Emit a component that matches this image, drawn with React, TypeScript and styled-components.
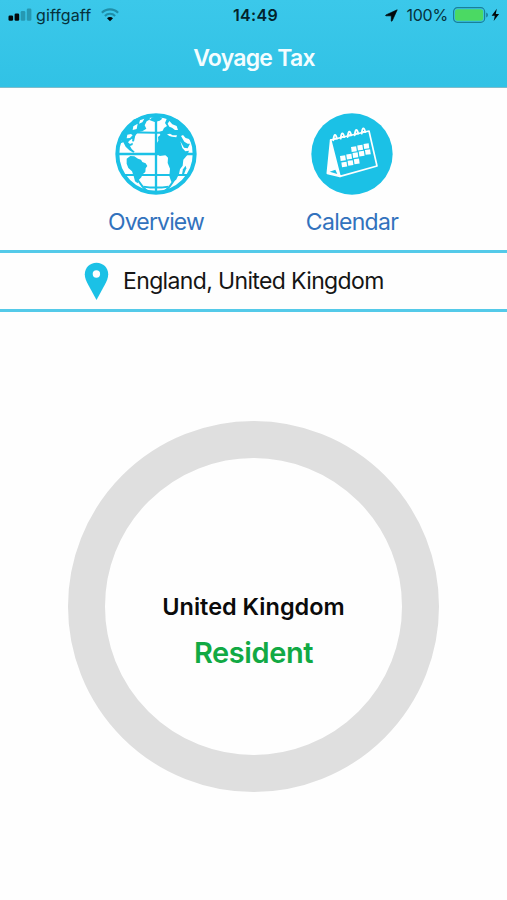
import React from 'react';
import styled, { createGlobalStyle } from 'styled-components';

const GlobalStyle = createGlobalStyle`
  *, *::before, *::after { box-sizing: border-box; }
  body { margin: 0; background: #fefefe; }
`;

const CYAN = '#1bc1e6';

const Screen = styled.main`
  width: 507px;
  height: 900px;
  overflow: hidden;
  display: flex;
  flex-direction: column;
  background: #fefefe;
  font-family: Inter, 'Liberation Sans', sans-serif;
`;

const Header = styled.header`
  height: 88px;
  flex: none;
  background: linear-gradient(#3bc8ea, #31c2e5);
  border-bottom: 1px solid #7fbccb;
`;

const StatusBar = styled.div`
  height: 30px;
  display: grid;
  grid-template-columns: 1fr auto 1fr;
  align-items: center;
  padding: 0 6px 0 8px;
  color: #06313b;
`;

const StatusGroup = styled.div<{ $end?: boolean }>`
  display: flex;
  align-items: center;
  justify-content: ${(p) => (p.$end ? 'flex-end' : 'flex-start')};
`;

const StatusText = styled.span<{ $spacing: number }>`
  font-size: 16px;
  line-height: 20px;
  letter-spacing: ${(p) => p.$spacing}px;
  white-space: nowrap;
`;

const Clock = styled(StatusText)`
  font-weight: 600;
  padding-left: 2px;
  color: #03232b;
`;

const Carrier = styled(StatusText)`
  margin: 0 10px 0 4px;
`;

const Charge = styled(StatusText)`
  margin: 0 5px 0 8px;
`;

const Title = styled.h1`
  margin: 13px 0 0;
  font-size: 23px;
  line-height: 30px;
  font-weight: 600;
  letter-spacing: -0.75px;
  padding-left: 1px;
  text-align: center;
  color: #f4fdff;
`;

const Tabs = styled.nav`
  height: 162px;
  flex: none;
  padding: 25px 57px 0 58px;
  display: grid;
  grid-template-columns: 1fr 1fr;
`;

const Tab = styled.a`
  display: flex;
  flex-direction: column;
  align-items: center;
  gap: 12px;
  color: #3272bd;
  text-decoration: none;
`;

const TabLabel = styled.span<{ $spacing: number }>`
  font-size: 23px;
  line-height: 30px;
  letter-spacing: ${(p) => p.$spacing}px;
`;

const LocationBar = styled.section`
  height: 62px;
  flex: none;
  display: flex;
  align-items: center;
  gap: 14px;
  padding-left: 84px;
  border-top: 3px solid #54cae9;
  border-bottom: 3px solid #54cae9;
`;

const LocationText = styled.span`
  font-size: 23px;
  line-height: 30px;
  letter-spacing: -0.64px;
  white-space: nowrap;
  color: #151515;
`;

const Ring = styled.section`
  width: 371px;
  height: 371px;
  flex: none;
  align-self: center;
  margin-top: 109px;
  border: 37px solid #dfdfdf;
  border-radius: 50%;
  padding-top: 134px;
  display: flex;
  flex-direction: column;
  align-items: center;
  gap: 13px;
`;

const Country = styled.strong`
  font-size: 23.5px;
  line-height: 30px;
  font-weight: 600;
  letter-spacing: 0;
  color: #0b0b0b;
`;

const Status = styled.span`
  font-size: 29px;
  line-height: 36px;
  font-weight: 600;
  letter-spacing: -0.4px;
  color: #11a944;
`;

const SignalIcon = () => (
  <svg width="24" height="14" viewBox="0 0 24 14">
    <rect x="0.5" y="7.5" width="4.6" height="5.2" rx="1.3" fill="#02090b" />
    <rect x="6.6" y="5.4" width="4.6" height="7.3" rx="1.3" fill="#02090b" />
    <rect x="12.7" y="3" width="4.6" height="9.7" rx="1.3" fill="#2698b2" />
    <rect x="18.8" y="0.5" width="4.6" height="12.2" rx="1.3" fill="#2698b2" />
  </svg>
);

const WifiIcon = () => (
  <svg width="18" height="14" viewBox="0 0 18 14" fill="none">
    <path d="M0.9 4.8 C5.2 0.3 12.8 0.3 17.1 4.8" stroke="#1f8ea8" strokeWidth="2.2" />
    <path d="M3.9 7.9 C6.7 5.1 11.3 5.1 14.1 7.9" stroke="#1f8ea8" strokeWidth="2.1" />
    <path d="M9 13.2 L6 10.2 C7.6 8.7 10.4 8.7 12 10.2 Z" fill="#02090b" />
  </svg>
);

const ArrowIcon = () => (
  <svg width="13" height="13" viewBox="0 0 13 13">
    <path
      d="M12.2 0.8 L7.2 11.8 C6.9 12.5 6.3 12.3 6.3 11.7 V6.8 H1.2 C0.5 6.8 0.4 6.2 1 5.9 Z"
      fill="#02090b"
      stroke="#02090b"
      strokeWidth="0.7"
      strokeLinejoin="round"
    />
  </svg>
);

const BatteryIcon = () => (
  <svg width="37" height="16" viewBox="0 0 37 16">
    <rect x="0.6" y="0.7" width="31" height="14.6" rx="3.8" fill="none" stroke="#1a8099" strokeWidth="1.2" />
    <rect x="2" y="2.2" width="28.2" height="11.6" rx="2.4" fill="#4bd963" />
    <path d="M33.2 5.5 C35.5 6.3 35.5 9.7 33.2 10.5 Z" fill="#1a8099" />
  </svg>
);

const BoltIcon = () => (
  <svg width="11" height="14" viewBox="0 0 11 14">
    <path d="M6.8 0.8 L1.6 7.7 H4.8 L3.7 13 L9.1 5.9 H5.8 Z" fill="#02090b" />
  </svg>
);

const GlobeIcon = () => (
  <svg width="82" height="82" viewBox="45 25 246 246">
    <circle cx="168" cy="148" r="116" fill="#fefefe" />
    <g fill="none" stroke={CYAN}>
      <circle cx="168" cy="148" r="116" strokeWidth="12" />
      <path d="M168 29 V267 M50 148 H286" strokeWidth="7" />
      <path d="M76 83 Q168 85 260 83 M72 211 H264" strokeWidth="6" />
      <path d="M136 38 C112 62 102 86 99 110 M99 190 C106 220 122 243 144 262 M236 180 C232 214 216 243 192 262" strokeWidth="6" />
    </g>
    <g fill={CYAN}>
      <path d="M70 84 L100 45 L140 30 L168 28 L166 35 L147 38 L151 44 L140 50 L134 62 L139 72 L127 80 L114 83 L103 96 L101 107 L96 102 L88 108 L84 113 L90 118 L98 114 L98 121 L90 124 L95 133 L104 141 L100 144 L88 137 L77 126 L70 113 L62 116 Z" />
      <path d="M80 162 L91 154 L103 155 L114 162 L123 165 L127 172 L137 176 L142 184 L137 191 L136 202 L128 209 L124 218 L117 225 L113 236 L105 230 L101 214 L96 200 L85 190 L80 177 Z" />
      <path d="M148 46 L157 38 L176 35 L187 42 L179 48 L164 52 L154 48 Z" />
      <path d="M178 82 L188 78 L192 70 L201 64 L195 55 L200 43 L207 37 L231 44 L263 72 L281 106 L273 112 L267 103 L257 100 L249 91 L243 94 L253 111 L263 117 L270 117 L263 131 L252 129 L241 110 L247 130 L256 140 L267 138 L262 151 L250 165 L248 183 L240 194 L237 208 L228 226 L214 232 L208 214 L210 192 L203 175 L204 159 L196 151 L179 154 L168 142 L167 121 L175 108 L174 97 L181 91 Z" />
      <path d="M249 194 L257 183 L259 191 L252 209 L246 209 Z" />
      <path d="M130 243 Q168 248 206 243 L202 249 Q168 254 134 249 Z" />
    </g>
    <g fill="#fefefe">
      <path d="M208 49 L217 59 L230 64 L234 76 L225 76 L216 69 L208 66 L203 57 Z" />
      <path d="M201 89 L210 87 L218 92 L231 92 L229 98 L216 96 L208 94 Z" />
      <path d="M82 90 L93 88 L98 92 L90 100 L80 101 Z M100 65 L113 57 L110 73 L98 76 Z M120 47 L133 42 L127 53 L117 57 Z" />
    </g>
  </svg>
);

const BINDER_RINGS = [119, 141, 162, 183, 204];

const CALENDAR_ROWS = [
  { x: 168, y: 126, count: 3 },
  { x: 135, y: 153, count: 5 },
  { x: 139, y: 172, count: 3 },
];

const CalendarIcon = () => (
  <svg width="82" height="82" viewBox="47 25 246 246">
    <circle cx="170" cy="148" r="122" fill={CYAN} />
    <g fill="none" stroke="#fefefe" strokeLinejoin="round" strokeLinecap="round">
      <path d="M106 106 L221 79 L245 184 L134 215 Z" strokeWidth="5" />
      <path d="M106 106 L96 206 L134 215" strokeWidth="5" />
      {BINDER_RINGS.map((x, i) => (
        <path
          key={x}
          d={`M${x - 5} ${107 - i * 5} C${x - 3} ${86 - i * 5} ${x + 2} ${87 - i * 5} ${x + 6} ${102 - i * 5} L${x - 2} ${101 - i * 5}`}
          strokeWidth="5.5"
        />
      ))}
    </g>
    <path d="M106 107 L134 214 L96 206 Z" fill="#fefefe" />
    <path d="M103 201 L120 195 L126 208 Z" fill={CYAN} />
    <g fill="#fefefe">
      {CALENDAR_ROWS.map((row) =>
        Array.from({ length: row.count }, (_, i) => {
          const x = row.x + i * 18.7;
          const y = row.y - i * 4.6;
          return (
            <rect
              key={`${x}-${y}`}
              x={x}
              y={y}
              width="15.6"
              height="15"
              transform={`rotate(-8 ${x + 7.8} ${y + 7.5})`}
            />
          );
        }),
      )}
    </g>
  </svg>
);

const PinIcon = () => (
  <svg width="25" height="39" viewBox="0 0 25 39">
    <path
      d="M12.5 0.8 C5.8 0.8 0.8 5.8 0.8 12.3 C0.8 16.2 2.4 19.4 4.2 22.8 L12.5 38 L20.8 22.8 C22.6 19.4 24.2 16.2 24.2 12.3 C24.2 5.8 19.2 0.8 12.5 0.8 Z"
      fill={CYAN}
    />
    <circle cx="12.4" cy="12" r="3.7" fill="#fefefe" />
  </svg>
);

export default function App() {
  return (
    <Screen>
      <GlobalStyle />
      <Header>
        <StatusBar>
          <StatusGroup>
            <SignalIcon />
            <Carrier $spacing={0.1}>giffgaff</Carrier>
            <WifiIcon />
          </StatusGroup>
          <Clock $spacing={0.3}>14:49</Clock>
          <StatusGroup $end>
            <ArrowIcon />
            <Charge $spacing={-0.2}>100%</Charge>
            <BatteryIcon />
            <BoltIcon />
          </StatusGroup>
        </StatusBar>
        <Title>Voyage Tax</Title>
      </Header>
      <Tabs>
        <Tab>
          <GlobeIcon />
          <TabLabel $spacing={-0.85}>Overview</TabLabel>
        </Tab>
        <Tab>
          <CalendarIcon />
          <TabLabel $spacing={-0.7}>Calendar</TabLabel>
        </Tab>
      </Tabs>
      <LocationBar>
        <PinIcon />
        <LocationText>England, United Kingdom</LocationText>
      </LocationBar>
      <Ring>
        <Country>United Kingdom</Country>
        <Status>Resident</Status>
      </Ring>
    </Screen>
  );
}
